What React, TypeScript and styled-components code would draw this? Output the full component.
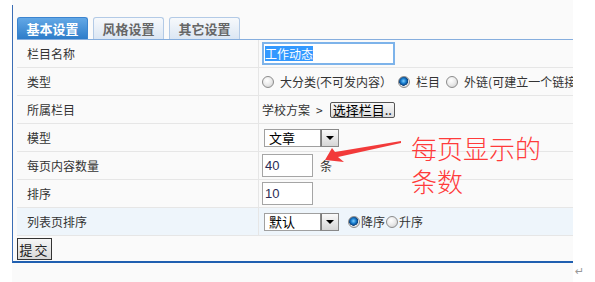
import styled, { createGlobalStyle } from 'styled-components'

const GlobalStyle = createGlobalStyle`
  html, body {
    margin: 0;
    padding: 0;
    background: #ffffff;
  }
  body {
    font-family: "Noto Sans CJK SC", "Liberation Sans", sans-serif;
    font-size: 12px;
    color: #333;
  }
`

const Page = styled.div`
  display: flex;
  align-items: flex-end;
  width: 595px;
  height: 282px;
  overflow: hidden;
`

const Sheet = styled.div`
  margin-left: 12px;
  width: 561px;
  height: 282px;
  background: #fafafa;
`

const Frame = styled.div`
  position: relative;
  margin-top: 5px;
  height: 258px;
  box-sizing: border-box;
  border-left: 1px solid #3a6db5;
  border-bottom: 2px solid #1f5fb0;
  padding: 12px 0 0 4px;
  overflow: hidden;
`

const TabBar = styled.div`
  display: flex;
  gap: 5px;
  height: 22px;
  border-bottom: 1px solid #86aede;
`

const Tab = styled.div<{ $active?: boolean }>`
  width: 71px;
  height: 22px;
  box-sizing: border-box;
  display: flex;
  align-items: center;
  justify-content: center;
  border: 1px solid ${p => (p.$active ? '#3b84cf' : '#b3cae6')};
  border-bottom: none;
  border-radius: 3px 3px 0 0;
  font-size: 13px;
  font-weight: 700;
  color: ${p => (p.$active ? '#ffffff' : '#666666')};
  background: ${p =>
    p.$active
      ? 'linear-gradient(#63a8e6, #2d7cc9)'
      : 'linear-gradient(#f7f9fc, #dbe6f3)'};
`

const Table = styled.div`
  width: 600px;
`

const Row = styled.div<{ $tint?: boolean }>`
  display: flex;
  height: 28px;
  box-sizing: border-box;
  border-bottom: 1px solid #e6e6e6;
  background: ${p => (p.$tint ? '#eef5fb' : 'transparent')};
`

const Label = styled.div`
  width: 242px;
  box-sizing: border-box;
  padding-left: 10px;
  border-right: 1px solid #e6e6e6;
  display: flex;
  align-items: center;
  color: #333;
`

const Field = styled.div`
  flex: 1;
  display: flex;
  align-items: center;
  padding-left: 3px;
  white-space: nowrap;
  color: #333;
`

const TextBox = styled.div<{ $w: number; $focus?: boolean }>`
  width: ${p => p.$w}px;
  height: 23px;
  box-sizing: border-box;
  border: ${p => (p.$focus ? '2px solid #7db3ea' : '1px solid #a5a5a5')};
  background: #fff;
  display: flex;
  align-items: center;
  padding-left: ${p => (p.$focus ? 1 : 2)}px;
  font-family: "Liberation Sans", "Noto Sans CJK SC", sans-serif;
  font-size: 13px;
  color: #2b2b55;
`

const Selected = styled.span`
  background: #3399ff;
  color: #fff;
  font-family: "Noto Sans CJK SC", sans-serif;
  font-size: 12px;
  line-height: 15px;
`

const Radio = styled.span<{ $on?: boolean }>`
  display: inline-block;
  width: 12px;
  height: 12px;
  box-sizing: border-box;
  border-radius: 50%;
  border: 1px solid #8c8c8c;
  background: ${p =>
    p.$on
      ? 'radial-gradient(circle at 45% 40%, #7fd0ff 0, #1a7fd0 30%, #0b3f7a 55%, #e8e8e8 60%, #d0d0d0 100%)'
      : 'radial-gradient(circle at 40% 35%, #ffffff 0, #eaeaea 50%, #c8c8c8 100%)'};
  flex-shrink: 0;
`

const Choice = styled.span<{ $gap: number; $lead?: number }>`
  display: inline-flex;
  align-items: center;
  gap: ${p => p.$gap}px;
  margin-left: ${p => p.$lead ?? 0}px;
  margin-right: ${p => p.$gap}px;
`

const Crumb = styled.span`
  margin-left: 6px;
`

const PickButton = styled.div`
  height: 16px;
  box-sizing: border-box;
  padding: 0 2px;
  margin-left: 7px;
  display: flex;
  align-items: center;
  border: 1px solid #555;
  border-radius: 2px;
  background: linear-gradient(#f8f8f8, #dcdcdc);
  color: #000;
  font-size: 13px;
`

const Select = styled.div`
  margin-left: 2px;
  width: 75px;
  height: 18px;
  box-sizing: border-box;
  border: 1px solid #a0a0a0;
  background: #fff;
  display: flex;
  align-items: center;
  justify-content: space-between;
  color: #000;
  font-size: 13px;
  padding-left: 4px;
`

const SelectArrow = styled.div`
  width: 17px;
  height: 16px;
  box-sizing: border-box;
  border-left: 1px solid #7a7a7a;
  outline: 1px solid #888;
  background: linear-gradient(#fafafa, #d6d6d6);
  display: flex;
  align-items: center;
  justify-content: center;
  &::after {
    content: '';
    border-left: 4px solid transparent;
    border-right: 4px solid transparent;
    border-top: 4px solid #000;
  }
`

const Unit = styled.span`
  margin-left: 7px;
`

const Submit = styled.div`
  margin-top: 2px;
  width: 35px;
  height: 22px;
  box-sizing: border-box;
  border: 1px solid #333;
  background: linear-gradient(#f6f6f6, #d8d8d8);
  display: flex;
  align-items: center;
  justify-content: center;
  letter-spacing: 2px;
  font-size: 13px;
  color: #222;
`

const Note = styled.div`
  position: absolute;
  left: 398px;
  top: 126px;
  width: 140px;
  font-size: 26px;
  line-height: 33px;
  color: #ff3b3b;
  font-weight: 300;
`

const Arrow = styled.svg`
  position: absolute;
  left: 296px;
  top: 130px;
`

const Mark = styled.span`
  margin: 0 0 4px 2px;
  color: #999;
  font-size: 11px;
  font-family: "DejaVu Sans", sans-serif;
`

export default function App() {
  return (
    <Page>
      <GlobalStyle />
      <Sheet>
        <Frame>
          <TabBar>
            <Tab $active>基本设置</Tab>
            <Tab>风格设置</Tab>
            <Tab>其它设置</Tab>
          </TabBar>
          <Table>
            <Row>
              <Label>栏目名称</Label>
              <Field>
                <TextBox $w={133} $focus>
                  <Selected>工作动态</Selected>
                </TextBox>
              </Field>
            </Row>
            <Row>
              <Label>类型</Label>
              <Field>
                <Choice $gap={6}>
                  <Radio />
                  大分类(不可发内容）
                </Choice>
                <Choice $gap={6}>
                  <Radio $on />
                  栏目
                </Choice>
                <Choice $gap={6}>
                  <Radio />
                  外链(可建立一个链接)
                </Choice>
              </Field>
            </Row>
            <Row>
              <Label>所属栏目</Label>
              <Field>
                学校方案
                <Crumb>&gt;</Crumb>
                <PickButton>选择栏目..</PickButton>
              </Field>
            </Row>
            <Row>
              <Label>模型</Label>
              <Field>
                <Select>
                  文章
                  <SelectArrow />
                </Select>
              </Field>
            </Row>
            <Row>
              <Label>每页内容数量</Label>
              <Field>
                <TextBox $w={51}>40</TextBox>
                <Unit>条</Unit>
              </Field>
            </Row>
            <Row>
              <Label>排序</Label>
              <Field>
                <TextBox $w={51}>10</TextBox>
              </Field>
            </Row>
            <Row $tint>
              <Label>列表页排序</Label>
              <Field>
                <Select>
                  默认
                  <SelectArrow />
                </Select>
                <Choice $gap={1} $lead={9}>
                  <Radio $on />
                  降序
                </Choice>
                <Choice $gap={1}>
                  <Radio />
                  升序
                </Choice>
              </Field>
            </Row>
          </Table>
          <Submit>提交</Submit>
          <Note>每页显示的条数</Note>
          <Arrow width="100" height="40" viewBox="0 0 100 40">
            <polygon points="16,25 23,13 26,17 92,6 92,8 29,22 35,27" fill="#f23a3a" />
          </Arrow>
        </Frame>
      </Sheet>
      <Mark>↵</Mark>
    </Page>
  )
}
